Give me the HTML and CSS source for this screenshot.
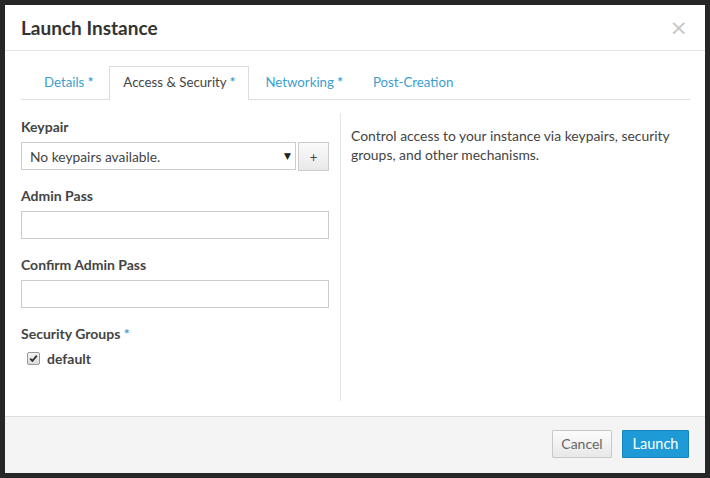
FILE: index.html
```html
<!DOCTYPE html>
<html>
<head>
<meta charset="utf-8">
<link rel="stylesheet" href="styles.css">
</head>
<body>
<div class="modal">
  <div class="modal-header">
    <h3 class="title">Launch Instance</h3>
    <span class="close">&times;</span>
  </div>
  <div class="modal-body">
    <ul class="tabs">
      <li class="tab"><a>Details <span class="req">*</span></a></li>
      <li class="tab active"><a>Access &amp; Security <span class="req">*</span></a></li>
      <li class="tab"><a>Networking <span class="req">*</span></a></li>
      <li class="tab"><a>Post-Creation</a></li>
    </ul>
    <div class="pane">
      <div class="left">
        <div class="field">
          <label class="lbl">Keypair</label>
          <div class="select-row">
            <div class="select"><span>No keypairs available.</span><span class="caret">&#9660;</span></div>
            <button class="plus">+</button>
          </div>
        </div>
        <div class="field">
          <label class="lbl">Admin Pass</label>
          <div class="input"></div>
        </div>
        <div class="field">
          <label class="lbl">Confirm Admin Pass</label>
          <div class="input"></div>
        </div>
        <div class="field">
          <label class="lbl">Security Groups <span class="req">*</span></label>
          <div class="check-row">
            <span class="checkbox"><svg width="9" height="9" viewBox="0 0 9 9"><path d="M1.2 4.6 L3.4 6.9 L7.8 1.6" fill="none" stroke="#333" stroke-width="1.8"/></svg></span>
            <span class="check-label">default</span>
          </div>
        </div>
      </div>
      <div class="right">
        <p class="help">Control access to your instance via keypairs, security groups, and other mechanisms.</p>
      </div>
    </div>
  </div>
  <div class="modal-footer">
    <button class="btn cancel">Cancel</button>
    <button class="btn launch">Launch</button>
  </div>
</div>
</body>
</html>
```
FILE: styles.css
```css
html, body {
  margin: 0;
  padding: 0;
  height: 100%;
}
body {
  background: #262626;
  font-family: Lato, "Open Sans", sans-serif;
  font-size: 14px;
  color: #444;
  padding: 5px;
  box-sizing: border-box;
}
.modal {
  width: 700px;
  height: 468px;
  background: #fff;
  display: flex;
  flex-direction: column;
}
.modal-header {
  height: 45px;
  border-bottom: 1px solid #e5e5e5;
  display: flex;
  align-items: center;
  justify-content: space-between;
  padding: 0 17px 0 16px;
}
.title {
  margin: 0;
  font-size: 19px;
  font-weight: 700;
  color: #333;
}
.close {
  font-size: 22px;
  color: #c8c8c8;
  font-family: "DejaVu Sans", sans-serif;
  line-height: 1;
}
.modal-body {
  flex: 1;
  padding: 15px 15px 15px 16px;
  display: flex;
  flex-direction: column;
}
.tabs {
  list-style: none;
  margin: 0;
  padding: 0 0 0 9px;
  display: flex;
  border-bottom: 1px solid #ddd;
  height: 33px;
  font-size: 13.25px;
}
.tab {
  margin-right: 2px;
}
.tab a {
  display: block;
  padding: 6px 13px 7px 13px;
  line-height: 19px;
  color: #3a9fcf;
  border: 1px solid transparent;
  border-bottom: none;
}
.tab.active a {
  color: #444;
  background: #fff;
  border-color: #ddd;
  height: 19px;
  margin-bottom: -1px;
  padding-bottom: 8px;
  position: relative;
  z-index: 1;
}
.req {
  color: #3a9fcf;
  font-weight: 700;
}
.pane {
  flex: 1;
  display: flex;
  padding-top: 13px;
}
.left {
  width: 308px;
  padding-right: 11px;
  padding-top: 6px;
  display: flex;
  flex-direction: column;
  gap: 18px;
}
.field {
  display: flex;
  flex-direction: column;
}
.lbl {
  font-weight: 700;
  font-size: 14px;
  color: #444;
  line-height: 16px;
  margin-bottom: 7px;
}
.select-row {
  display: flex;
  align-items: flex-start;
  gap: 2px;
  height: 28px;
}
.select {
  width: 275px;
  height: 28px;
  box-sizing: border-box;
  border: 1px solid #ccc;
  display: flex;
  align-items: center;
  justify-content: space-between;
  padding: 0 4px 0 8px;
  color: #444;
  font-size: 13.8px;
}
.caret {
  font-size: 9px;
  color: #222;
  font-family: "DejaVu Sans", sans-serif;
}
.plus {
  width: 31px;
  height: 29px;
  flex-shrink: 0;
  border: 1px solid #ccc;
  background: linear-gradient(#fafafa, #e9e9e9);
  font-family: Lato, sans-serif;
  font-size: 13px;
  color: #444;
  padding: 0;
}
.input {
  width: 308px;
  height: 28px;
  box-sizing: border-box;
  border: 1px solid #ccc;
}
.check-row {
  display: flex;
  align-items: center;
  padding-left: 6px;
  gap: 7px;
  margin-top: 1px;
}
.checkbox {
  width: 11px;
  height: 11px;
  border: 1px solid #999;
  border-radius: 2px;
  background: linear-gradient(#f4f4f4, #dcdcdc);
  display: flex;
  align-items: center;
  justify-content: center;
}
.check-label {
  font-weight: 700;
  color: #444;
}
.right {
  flex: 1;
  border-left: 1px solid #e3e3e3;
  padding-left: 10px;
}
.help {
  margin: 13px 0 0 0;
  line-height: 19px;
  color: #444;
  font-size: 13.9px;
}
.modal-footer {
  height: 57px;
  box-sizing: border-box;
  border-top: 1px solid #ddd;
  background: #f4f4f4;
  display: flex;
  justify-content: flex-end;
  align-items: center;
  padding: 0 16px 3px 0;
  gap: 10px;
}
.btn {
  height: 28px;
  font-family: Lato, sans-serif;
  font-size: 14px;
  padding: 0 8px;
  border-radius: 1px;
}
.cancel {
  background: linear-gradient(#fcfcfc, #e8e8e8);
  border: 1px solid #c8c8c8;
  color: #666;
  width: 60px;
}
.launch {
  background: #1e9bd7;
  border: 1px solid #1583bb;
  color: #fff;
  width: 67px;
  font-size: 14.5px;
}
```
